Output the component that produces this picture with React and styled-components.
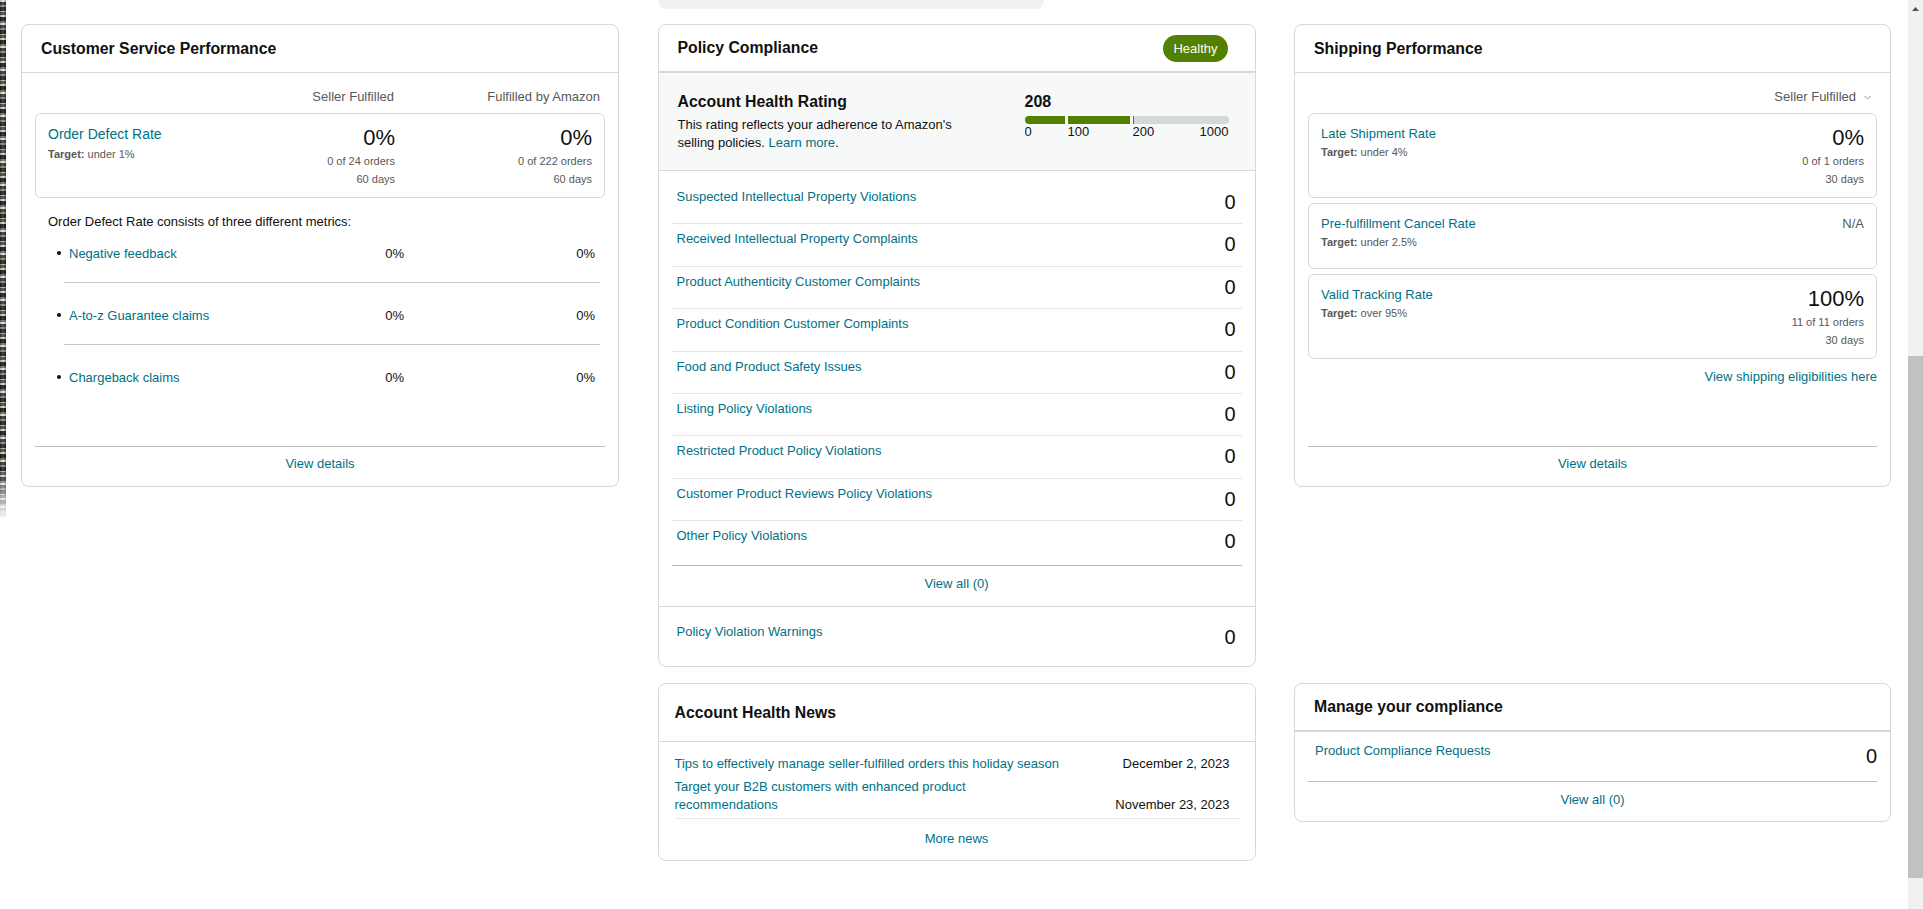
import React from "react";
import styled, { createGlobalStyle } from "styled-components";

const GlobalStyle = createGlobalStyle`
  html, body, #root {
    height: 100%;
  }
  body {
    margin: 0;
    font-family: "Liberation Sans", Arial, sans-serif;
    color: #0f1111;
    background: #fff;
    overflow: hidden;
  }
  * {
    box-sizing: border-box;
  }
`;

const Screen = styled.div`
  display: flex;
  height: 100%;
`;

// the sliver of desktop wallpaper left of the page
const EdgeStrip = styled.div`
  flex: none;
  width: 6px;
  background:
    linear-gradient(180deg, rgba(255, 255, 255, 0) 0 470px, #fff 520px),
    linear-gradient(90deg, rgba(0, 0, 0, 0.25), rgba(255, 255, 255, 0.15) 50%, rgba(0, 0, 0, 0.3)),
    repeating-linear-gradient(180deg,
      #e9e8e2 0 2px, #3a3833 2px 5px, #8f8b80 5px 7px, #23221f 7px 11px,
      #b9b5a8 11px 12px, #4d4a43 12px 15px, #d6d3c8 15px 17px, #1c1b19 17px 21px,
      #76726a 21px 23px);
`;

const Page = styled.main`
  flex: 1;
  min-width: 0;
  padding: 0 17px 0 15px;
`;

const ColumnsRow = styled.div`
  display: grid;
  grid-template-columns: 598px 598px 597px;
  justify-content: space-between;
`;

const TopRow = styled(ColumnsRow)`
  height: 9px;
`;

const ScrolledStub = styled.div`
  grid-column: 2;
  width: 386px;
  height: 9px;
  background: #f0f2f2;
  border-radius: 0 0 8px 8px;
`;

const Grid = styled(ColumnsRow)`
  row-gap: 16px;
  align-items: start;
  margin-top: 15px;
`;

const Card = styled.section`
  display: flex;
  flex-direction: column;
  grid-column: ${(p) => p.$col || "auto"};
  height: ${(p) => (p.$height ? `${p.$height}px` : "auto")};
  background: #fff;
  border: 1px solid #d5d9d9;
  border-radius: 8px;
  overflow: hidden;
`;

const CardHeader = styled.header`
  flex: none;
  display: flex;
  align-items: center;
  justify-content: space-between;
  height: ${(p) => p.$height || 48}px;
  padding: 0 ${(p) => p.$padRight || 19}px 0 ${(p) => p.$padLeft || 19}px;
  border-bottom: ${(p) => (p.$thick ? 2 : 1)}px solid #d5d9d9;
`;

const CardTitle = styled.h2`
  margin: 0;
  font-size: 15.8px;
  line-height: 20px;
  font-weight: 700;
  color: #0f1111;
`;

const StatusPill = styled.span`
  display: inline-flex;
  align-items: center;
  height: 27px;
  padding: 0 10px;
  border-radius: 14px;
  background: #538000;
  color: #fff;
  font-size: 13px;
`;

const CardBody = styled.div`
  flex: 1;
  display: flex;
  flex-direction: column;
  padding: 0 13px;
`;

const TextLink = styled.a`
  color: #007185;
  text-decoration: none;
  cursor: pointer;
`;

const CardFooter = styled.div`
  flex: none;
  margin: 0 13px;
  padding: 7px 0 12px;
  border-top: 1px solid #bbbfbf;
  text-align: center;
  font-size: 13px;
  line-height: 20px;
`;

/* customer service */

const ColumnHeads = styled.div`
  display: grid;
  grid-template-columns: 1fr 197px 206px;
  padding: 16px 5px 8px 0;
  font-size: 13px;
  line-height: 16px;
  color: #565959;
  text-align: right;
`;

const MetricBox = styled.div`
  display: grid;
  grid-template-columns: ${(p) => p.$cols || "1fr auto"};
  align-items: start;
  min-height: ${(p) => p.$minHeight || 0}px;
  padding: 10px 12px 9px;
  border: 1px solid #d5d9d9;
  border-radius: 6px;

  & + & {
    margin-top: 5px;
  }
`;

const MetricName = styled(TextLink)`
  display: block;
  font-size: ${(p) => p.$size || 13}px;
  line-height: ${(p) => p.$line || 19}px;
`;

const Target = styled.div`
  margin-top: ${(p) => p.$gap ?? 1}px;
  font-size: 11px;
  line-height: 16px;
  color: #565959;

  b {
    font-weight: 700;
  }
`;

const ValueStack = styled.div`
  text-align: right;
  color: #565959;
  font-size: 11px;
  line-height: 18px;
`;

const BigValue = styled.div`
  font-size: 22px;
  line-height: 28px;
  color: #0f1111;
`;

const PlainValue = styled.div`
  padding-top: 2px;
  font-size: 13px;
  line-height: 16px;
  color: #565959;
`;

const Intro = styled.p`
  margin: 15px 0 0;
  padding-left: 13px;
  font-size: 13px;
  line-height: 18px;
`;

const Bullets = styled.ul`
  margin: 14px 5px 0 0;
  padding: 0 0 0 29px;
  list-style: none;
`;

const BulletItem = styled.li`
  position: relative;
  display: grid;
  grid-template-columns: 1fr 190px 191px;
  padding: 24px 5px 19px;
  border-bottom: 1px solid #c4c7c7;
  font-size: 13px;
  line-height: 18px;
  text-align: right;

  &::before {
    content: "";
    position: absolute;
    left: -7px;
    bottom: 27px;
    width: 4px;
    height: 4px;
    border-radius: 50%;
    background: #0f1111;
  }
  & > :first-child {
    text-align: left;
  }
  &:first-child {
    padding-top: 0;
  }
  &:last-child {
    border-bottom: none;
  }
`;

/* policy compliance */

const RatingPanel = styled.div`
  display: flex;
  justify-content: space-between;
  align-items: flex-start;
  padding: 19px 26px 18px 19px;
  background: #f7f8f8;
  border-bottom: 1px solid #d5d9d9;
`;

const RatingTitle = styled.h3`
  margin: 0;
  font-size: 15.8px;
  line-height: 20px;
  font-weight: 700;
`;

const RatingText = styled.p`
  width: 300px;
  margin: 4px 0 0;
  font-size: 13px;
  line-height: 18px;
`;

const Score = styled.div`
  width: 204px;
`;

const ScoreValue = styled.div`
  font-size: 16px;
  line-height: 20px;
  font-weight: 700;
`;

const Segments = styled.div`
  display: flex;
  gap: 3px;
  margin-top: ${(p) => p.$gap || 0}px;
`;

const Segment = styled.div`
  flex: ${(p) => (p.$width ? `0 0 ${p.$width}px` : "1")};
  display: flex;
  justify-content: space-between;
  height: ${(p) => p.$height || "auto"};
  overflow: hidden;
  background: ${(p) => (p.$track ? "#d5d9d9" : "transparent")};
  border-radius: ${(p) => p.$radius || "0"};
  font-size: 13px;
  line-height: 14px;
`;

const SegmentFill = styled.div`
  height: 100%;
  background: #538000;
`;

const ViolationsBlock = styled.div`
  border-bottom: 1px solid #d5d9d9;
`;

const ViolationList = styled.div`
  margin: 0 13px;
  padding-top: 11px;
`;

const ViolationRow = styled.div`
  display: flex;
  justify-content: space-between;
  align-items: flex-start;
  padding: ${(p) => p.$pad || "7px 6px 9px 5px"};
  border-bottom: ${(p) => (p.$noLine ? "none" : `1px solid ${p.$line || "#e3e6e6"}`)};
  font-size: 13px;
  line-height: 16px;
`;

const CountValue = styled.span`
  margin-top: 1px;
  font-size: 20px;
  line-height: 24.4px;
  color: #0f1111;
`;

const ListFooter = styled.div`
  margin-top: 2px;
  padding: 8px 0 12px;
  border-top: 1px solid #b5b9b9;
  text-align: center;
  font-size: 13px;
  line-height: 20px;
`;

/* news */

const NewsBody = styled.div`
  padding: 13px 25px 0 16px;
`;

const NewsRow = styled.div`
  display: flex;
  justify-content: space-between;
  align-items: flex-end;
  font-size: 13px;
  line-height: 18px;

  & + & {
    margin-top: 5px;
  }
`;

const NewsTitle = styled(TextLink)`
  flex: 0 1 390px;
`;

const NewsDate = styled.span`
  white-space: nowrap;
  color: #0f1111;
`;

const NewsDivider = styled.div`
  height: 1px;
  margin: 4px 14px 0 16px;
  background: #e6e8e8;
  box-shadow: 0 5px 9px -3px rgba(0, 0, 0, 0.07);
`;

const CenteredLink = styled.div`
  padding: ${(p) => p.$pad || "10px 0 11px"};
  text-align: center;
  font-size: 13px;
  line-height: 20px;
`;

/* shipping */

const FilterRow = styled.div`
  display: flex;
  justify-content: flex-end;
  align-items: center;
  padding: 16px 6px 8px 0;
  font-size: 13px;
  line-height: 16px;
  color: #565959;

  svg {
    margin-left: 8px;
  }
`;

const EligibilityLink = styled(TextLink)`
  align-self: flex-end;
  margin-top: 10px;
  font-size: 13px;
  line-height: 16px;
`;

const ComplianceList = styled.div`
  margin: 0 13px;
`;

/* scrollbar */

const Scrollbar = styled.div`
  flex: none;
  display: flex;
  flex-direction: column;
  width: 15px;
  background: #f1f1f1;
`;

const ScrollArrow = styled.div`
  display: flex;
  align-items: center;
  justify-content: center;
  height: 17px;
`;

const ScrollThumb = styled.div`
  height: 522px;
  margin-top: 339px;
  background: #c1c1c1;
`;

const violations = [
  "Suspected Intellectual Property Violations",
  "Received Intellectual Property Complaints",
  "Product Authenticity Customer Complaints",
  "Product Condition Customer Complaints",
  "Food and Product Safety Issues",
  "Listing Policy Violations",
  "Restricted Product Policy Violations",
  "Customer Product Reviews Policy Violations",
  "Other Policy Violations",
];

const defectParts = ["Negative feedback", "A-to-z Guarantee claims", "Chargeback claims"];

const shippingMetrics = [
  { name: "Late Shipment Rate", target: "under 4%", value: "0%", orders: "0 of 1 orders", days: "30 days" },
  { name: "Pre-fulfillment Cancel Rate", target: "under 2.5%", na: true },
  { name: "Valid Tracking Rate", target: "over 95%", value: "100%", orders: "11 of 11 orders", days: "30 days" },
];

const news = [
  { title: "Tips to effectively manage seller-fulfilled orders this holiday season", date: "December 2, 2023" },
  { title: "Target your B2B customers with enhanced product recommendations", date: "November 23, 2023" },
];

const scoreBands = [
  { from: 0, to: 100, width: 40, radius: "4px 0 0 4px" },
  { from: 100, to: 200, width: 62 },
  { from: 200, to: 1000, radius: "0 4px 4px 0" },
];

function ScoreBar({ score }) {
  return (
    <>
      <Segments $gap={4}>
        {scoreBands.map((band) => {
          const ratio = Math.min(Math.max((score - band.from) / (band.to - band.from), 0), 1);
          const width = ratio >= 1 ? "100%" : ratio > 0 ? `max(${ratio * 100}%, 1.5px)` : "0";
          return (
            <Segment key={band.from} $width={band.width} $height="8px" $track $radius={band.radius}>
              <SegmentFill style={{ width }} />
            </Segment>
          );
        })}
      </Segments>
      <Segments $gap={1}>
        <Segment $width={40}>0</Segment>
        <Segment $width={62}>100</Segment>
        <Segment>
          <span>200</span>
          <span>1000</span>
        </Segment>
      </Segments>
    </>
  );
}

function Chevron() {
  return (
    <svg width="7" height="5" viewBox="0 0 7 5" fill="none">
      <path d="M0.5 1 L3.5 4 L6.5 1" stroke="#8d9096" strokeWidth="1" />
    </svg>
  );
}

function CustomerService() {
  return (
    <Card $height={463}>
      <CardHeader>
        <CardTitle>Customer Service Performance</CardTitle>
      </CardHeader>
      <CardBody>
        <ColumnHeads>
          <span />
          <span>Seller Fulfilled</span>
          <span>Fulfilled by Amazon</span>
        </ColumnHeads>
        <MetricBox $cols="1fr 197px 197px">
          <div>
            <MetricName $size={14} $line={20}>Order Defect Rate</MetricName>
            <Target $gap={2}><b>Target:</b> under 1%</Target>
          </div>
          <ValueStack>
            <BigValue>0%</BigValue>
            <div>0 of 24 orders</div>
            <div>60 days</div>
          </ValueStack>
          <ValueStack>
            <BigValue>0%</BigValue>
            <div>0 of 222 orders</div>
            <div>60 days</div>
          </ValueStack>
        </MetricBox>
        <Intro>Order Defect Rate consists of three different metrics:</Intro>
        <Bullets>
          {defectParts.map((part) => (
            <BulletItem key={part}>
              <TextLink>{part}</TextLink>
              <span>0%</span>
              <span>0%</span>
            </BulletItem>
          ))}
        </Bullets>
      </CardBody>
      <CardFooter>
        <TextLink>View details</TextLink>
      </CardFooter>
    </Card>
  );
}

function PolicyCompliance() {
  return (
    <Card>
      <CardHeader $thick $padRight={27}>
        <CardTitle>Policy Compliance</CardTitle>
        <StatusPill>Healthy</StatusPill>
      </CardHeader>
      <RatingPanel>
        <div>
          <RatingTitle>Account Health Rating</RatingTitle>
          <RatingText>
            This rating reflects your adherence to Amazon's
            <br />
            selling policies. <TextLink>Learn more</TextLink>.
          </RatingText>
        </div>
        <Score>
          <ScoreValue>208</ScoreValue>
          <ScoreBar score={208} />
        </Score>
      </RatingPanel>
      <ViolationsBlock>
        <ViolationList>
          {violations.map((label, i) => (
            <ViolationRow key={label} $noLine={i === violations.length - 1}>
              <TextLink>{label}</TextLink>
              <CountValue>0</CountValue>
            </ViolationRow>
          ))}
          <ListFooter>
            <TextLink>View all (0)</TextLink>
          </ListFooter>
        </ViolationList>
      </ViolationsBlock>
      <ViolationRow $pad="17px 19px 17px 18px" $noLine>
        <TextLink>Policy Violation Warnings</TextLink>
        <CountValue>0</CountValue>
      </ViolationRow>
    </Card>
  );
}

function ShippingPerformance() {
  return (
    <Card $height={463}>
      <CardHeader>
        <CardTitle>Shipping Performance</CardTitle>
      </CardHeader>
      <CardBody>
        <FilterRow>
          Seller Fulfilled
          <Chevron />
        </FilterRow>
        {shippingMetrics.map((m) => (
          <MetricBox key={m.name} $minHeight={66}>
            <div>
              <MetricName>{m.name}</MetricName>
              <Target><b>Target:</b> {m.target}</Target>
            </div>
            {m.na ? (
              <PlainValue>N/A</PlainValue>
            ) : (
              <ValueStack>
                <BigValue>{m.value}</BigValue>
                <div>{m.orders}</div>
                <div>{m.days}</div>
              </ValueStack>
            )}
          </MetricBox>
        ))}
        <EligibilityLink>View shipping eligibilities here</EligibilityLink>
      </CardBody>
      <CardFooter>
        <TextLink>View details</TextLink>
      </CardFooter>
    </Card>
  );
}

function HealthNews() {
  return (
    <Card $col={2}>
      <CardHeader $height={58} $padLeft={16}>
        <CardTitle>Account Health News</CardTitle>
      </CardHeader>
      <NewsBody>
        {news.map((item) => (
          <NewsRow key={item.title}>
            <NewsTitle>{item.title}</NewsTitle>
            <NewsDate>{item.date}</NewsDate>
          </NewsRow>
        ))}
      </NewsBody>
      <NewsDivider />
      <CenteredLink>
        <TextLink>More news</TextLink>
      </CenteredLink>
    </Card>
  );
}

function ManageCompliance() {
  return (
    <Card $col={3}>
      <CardHeader $thick>
        <CardTitle>Manage your compliance</CardTitle>
      </CardHeader>
      <ComplianceList>
        <ViolationRow $pad="11px 0 13px 7px" $line="#bbbfbf">
          <TextLink>Product Compliance Requests</TextLink>
          <CountValue>0</CountValue>
        </ViolationRow>
      </ComplianceList>
      <CenteredLink $pad="8px 0 11px">
        <TextLink>View all (0)</TextLink>
      </CenteredLink>
    </Card>
  );
}

export default function App() {
  return (
    <>
      <GlobalStyle />
      <Screen>
        <EdgeStrip />
        <Page>
          <TopRow>
            <ScrolledStub />
          </TopRow>
          <Grid>
            <CustomerService />
            <PolicyCompliance />
            <ShippingPerformance />
            <HealthNews />
            <ManageCompliance />
          </Grid>
        </Page>
        <Scrollbar>
          <ScrollArrow>
            <svg width="7" height="4" viewBox="0 0 7 4">
              <path d="M3.5 0 L7 4 L0 4 Z" fill="#505050" />
            </svg>
          </ScrollArrow>
          <ScrollThumb />
        </Scrollbar>
      </Screen>
    </>
  );
}
